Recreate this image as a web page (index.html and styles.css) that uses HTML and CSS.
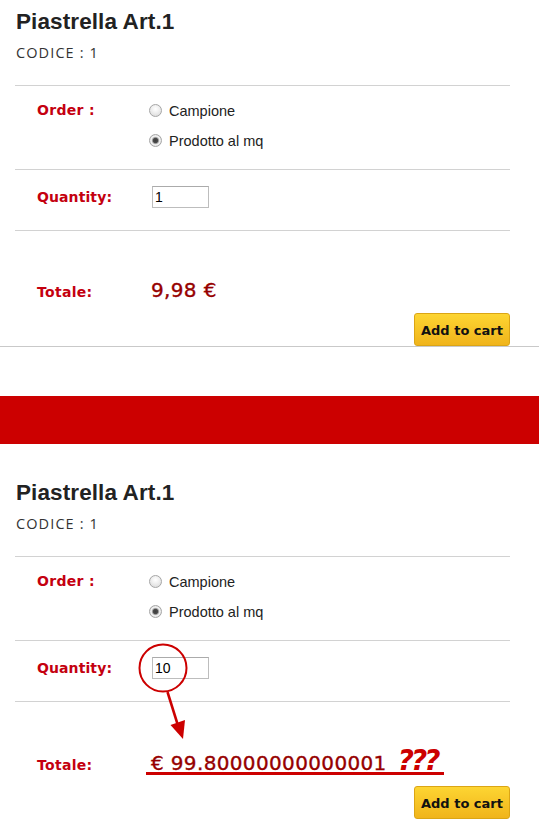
FILE: index.html
```html
<!DOCTYPE html>
<html lang="it">
<head>
<meta charset="utf-8">
<title>Piastrella Art.1</title>
<link rel="stylesheet" href="styles.css">
</head>
<body>
<section class="product product-first">
  <div class="inner">
    <h1 class="title">Piastrella Art.1</h1>
    <p class="code">CODICE : 1</p>
    <div class="opt-row order-row">
      <span class="label label-tall">Order :</span>
      <div class="radios">
        <label class="radio"><input type="radio" name="o1"><span>Campione</span></label>
        <label class="radio"><input type="radio" name="o1" checked><span>Prodotto al mq</span></label>
      </div>
    </div>
    <div class="opt-row qty-row">
      <span class="label label-qty">Quantity:</span>
      <input class="qty" type="text" value="1">
    </div>
    <div class="opt-row total-row">
      <span class="label">Totale:</span>
      <span class="price">9,98 €</span>
    </div>
    <div class="actions"><button class="cart-btn" type="button">Add to cart</button></div>
  </div>
</section>

<div class="band"></div>

<section class="product product-second">
  <div class="inner">
    <h1 class="title">Piastrella Art.1</h1>
    <p class="code">CODICE : 1</p>
    <div class="opt-row order-row">
      <span class="label label-tall">Order :</span>
      <div class="radios">
        <label class="radio"><input type="radio" name="o2"><span>Campione</span></label>
        <label class="radio"><input type="radio" name="o2" checked><span>Prodotto al mq</span></label>
      </div>
    </div>
    <div class="opt-row qty-row">
      <span class="label label-qty">Quantity:</span>
      <input class="qty" type="text" value="10">
    </div>
    <div class="opt-row total-row">
      <span class="label">Totale:</span>
      <span class="price">€ 99.80000000000001</span>
      <span class="question">???</span>
    </div>
    <div class="actions"><button class="cart-btn" type="button">Add to cart</button></div>
  </div>
  <svg class="annot" width="539" height="375" viewBox="0 0 539 375" aria-hidden="true">
    <circle cx="163" cy="224" r="23.5" fill="none" stroke="#cc0000" stroke-width="2"/>
    <line x1="167.5" y1="248" x2="177.5" y2="280" stroke="#cc0000" stroke-width="2.6"/>
    <polygon points="183,295 185,276 170.5,281" fill="#cc0000"/>
    <rect x="146" y="328" width="298" height="3" fill="#cc0000"/>
  </svg>
</section>
</body>
</html>
```
FILE: styles.css
```css
html, body {
  margin: 0;
  padding: 0;
  background: #ffffff;
}

body {
  width: 539px;
  overflow: hidden;
  font-family: "Liberation Sans", Arial, sans-serif;
}

.product {
  position: relative;
  border-bottom: 1px solid #c9c9c9;
}

.product-first {
  padding-top: 10px;
}

.product-second {
  padding-top: 37px;
}

.inner {
  margin-left: 15px;
  width: 495px;
}

.title {
  margin: 0 0 0 1px;
  font-family: "Liberation Sans", Arial, sans-serif;
  font-weight: bold;
  font-size: 22.5px;
  line-height: 24px;
  letter-spacing: 0.1px;
  color: #222222;
}

.code {
  margin: 9px 0 0 1px;
  font-family: "Open Sans", "DejaVu Sans", sans-serif;
  font-size: 14.5px;
  line-height: 20px;
  letter-spacing: 1.1px;
  color: #333333;
}

.opt-row {
  display: grid;
  grid-template-columns: 112px auto;
  padding-left: 22px;
  border-top: 1px solid #d2d2d2;
}

.order-row {
  margin-top: 22px;
  padding-top: 9px;
  padding-bottom: 14px;
  align-items: start;
}

.qty-row {
  padding-top: 16px;
  padding-bottom: 22px;
  align-items: center;
}

.total-row {
  display: flex;
  align-items: baseline;
  padding-top: 47px;
}

.label {
  font-family: "DejaVu Sans", Verdana, sans-serif;
  font-weight: bold;
  font-size: 14px;
  letter-spacing: 0.3px;
  color: #c4000f;
  line-height: 24px;
}

.total-row .label {
  width: 112px;
  flex: none;
  line-height: 20px;
  letter-spacing: 0.3px;
}

.label-tall {
  line-height: 30px;
}

.label-qty {
  line-height: 22px;
  letter-spacing: 0.1px;
}

.radios {
  display: flex;
  flex-direction: column;
}

.radio {
  display: flex;
  align-items: center;
  height: 30px;
  font-family: "Liberation Sans", Arial, sans-serif;
  font-size: 14.5px;
  color: #222222;
}

.radio span {
  padding-top: 2px;
}

.radio input {
  appearance: none;
  -webkit-appearance: none;
  margin: 0 7px 0 0;
  width: 13px;
  height: 13px;
  border: 1px solid #a6a6a6;
  border-radius: 50%;
  background: radial-gradient(circle at 50% 35%, #ffffff 0, #f2f2f2 35%, #d6d6d6 100%);
  box-sizing: border-box;
}

.radio input:checked {
  background: radial-gradient(circle, #3c3c3c 0, #4a4a4a 2.2px, #9a9a9a 3px, #e8e8e8 4px, #f4f4f4 4.5px, #d8d8d8 6px);
}

.qty {
  box-sizing: border-box;
  width: 57px;
  height: 22px;
  margin: 0 0 0 3px;
  padding: 0 2px;
  border: 1px solid #bdbdbd;
  border-top-color: #ababab;
  border-radius: 0;
  font-family: "Liberation Sans", Arial, sans-serif;
  font-size: 14px;
  color: #000000;
  background: #ffffff;
  outline: none;
}

.price {
  margin-left: 2px;
  font-family: "DejaVu Sans", Verdana, sans-serif;
  font-size: 20px;
  line-height: 24px;
  letter-spacing: 0.35px;
  color: #960000;
  -webkit-text-stroke: 0.35px #960000;
}

.question {
  margin-left: 11px;
  font-family: "DejaVu Sans", Verdana, sans-serif;
  font-weight: bold;
  font-style: italic;
  font-size: 28px;
  line-height: 24px;
  letter-spacing: -3px;
  color: #cc0000;
}

.actions {
  display: flex;
  justify-content: flex-end;
  margin-top: 11px;
}

.cart-btn {
  box-sizing: border-box;
  width: 96px;
  height: 33px;
  margin: 0;
  padding: 2px 0 0;
  border: 1px solid #dba515;
  border-radius: 3px;
  background: linear-gradient(#fdd532, #f0b41b);
  font-family: "DejaVu Sans", Verdana, sans-serif;
  font-weight: bold;
  font-size: 13px;
  color: #111111;
  cursor: pointer;
}

.band {
  margin-top: 49px;
  height: 48px;
  background: #cc0000;
}

.annot {
  position: absolute;
  left: 0;
  top: 0;
  pointer-events: none;
  overflow: visible;
}
```
